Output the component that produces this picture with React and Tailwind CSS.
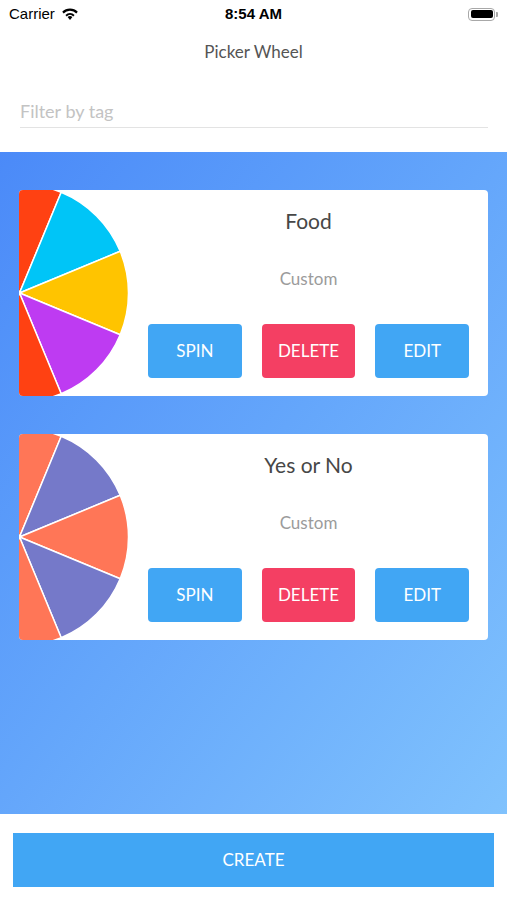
import React from "react";

const R = 109;
function pt(deg) {
  const a = (deg * Math.PI) / 180;
  return [0.5 + R * Math.cos(a), 103 + R * Math.sin(a)];
}
function slice(a1, a2) {
  const [x1, y1] = pt(a1);
  const [x2, y2] = pt(a2);
  return `M0.5 103 L${x1.toFixed(2)} ${y1.toFixed(2)} A${R} ${R} 0 0 1 ${x2.toFixed(2)} ${y2.toFixed(2)} Z`;
}

function Wheel({ colors }) {
  const ranges = [
    [-112.5, -67.5],
    [-67.5, -22.5],
    [-22.5, 22.5],
    [22.5, 67.5],
    [67.5, 112.5],
  ];
  return (
    <svg width="110" height="206" viewBox="0 0 110 206" className="shrink-0 block">
      {ranges.map((r, i) => (
        <path key={i} d={slice(r[0], r[1])} fill={colors[i]} stroke="#ffffff" strokeWidth="1.5" strokeLinejoin="round" />
      ))}
    </svg>
  );
}

function Card({ title, colors }) {
  return (
    <div className="flex h-[206px] w-full overflow-hidden rounded-[4px] bg-white">
      <Wheel colors={colors} />
      <div className="ml-[-1px] flex flex-1 flex-col items-center pl-5 pr-[19px] pt-[17px] pb-[18px]">
        <div className="text-[21px] leading-[28px] text-[#474747]">{title}</div>
        <div className="mt-[32px] text-[17px] leading-[24px] text-[#9b9b9b]">Custom</div>
        <div className="mt-[33px] flex w-full gap-[20px]">
          <button className="flex h-[54px] flex-1 items-center justify-center rounded-[4px] bg-[#41a6f4] text-[17px] text-white">SPIN</button>
          <button className="flex h-[54px] flex-1 items-center justify-center rounded-[4px] bg-[#f43f63] text-[17px] text-white">DELETE</button>
          <button className="flex h-[54px] flex-1 items-center justify-center rounded-[4px] bg-[#41a6f4] text-[17px] text-white">EDIT</button>
        </div>
      </div>
    </div>
  );
}

export default function App() {
  return (
    <div className="flex h-[900px] w-full flex-col bg-white" style={{ fontFamily: "Lato, 'Open Sans', sans-serif" }}>
      {/* status bar */}
      <div className="relative flex h-[28px] items-center justify-between px-[9px]" style={{ fontFamily: "'Liberation Sans', Arial, sans-serif" }}>
        <div className="flex items-center gap-[6px] text-[15px] text-black">
          <span>Carrier</span>
          <svg width="18" height="14" viewBox="0 0 18 13">
            <path d="M9 12.5 L6.6 9.6 A3.6 3.6 0 0 1 11.4 9.6 Z" fill="#000" />
            <path d="M4.4 7.4 A6.7 6.7 0 0 1 13.6 7.4 L12.3 8.9 A4.8 4.8 0 0 0 5.7 8.9 Z" fill="#000" />
            <path d="M1.2 4.3 A11 11 0 0 1 16.8 4.3 L15.3 5.9 A8.9 8.9 0 0 0 2.7 5.9 Z" fill="#000" />
          </svg>
        </div>
        <div className="absolute left-0 right-0 text-center text-[15px] font-bold text-black">8:54 AM</div>
        <div className="flex items-center">
          <div className="flex h-[13px] w-[27px] items-center rounded-[4px] border border-[#a8a8a8] p-[1.5px]">
            <div className="h-full w-full rounded-[2px] bg-black" />
          </div>
          <div className="ml-[1px] h-[5px] w-[2px] rounded-r-[1px] bg-[#a8a8a8]" />
        </div>
      </div>

      {/* header */}
      <div className="flex h-[48px] items-center justify-center text-[17px] text-[#555555]">Picker Wheel</div>

      {/* filter */}
      <div className="h-[76px] pl-5 pr-[19px] pt-[22px]">
        <div className="h-[30px] border-b border-[#e3e3e3] text-[18px] leading-[26px] text-[#c3c3c3]">Filter by tag</div>
      </div>

      {/* list */}
      <div className="flex flex-1 flex-col gap-[38px] bg-gradient-to-br from-[#4b8af8] to-[#80c2fd] px-[19px] pt-[38px]">
        <Card title="Food" colors={["#ff4112", "#00c5f7", "#ffc400", "#be3bf2", "#ff4112"]} />
        <Card title="Yes or No" colors={["#ff7657", "#7579c9", "#ff7657", "#7579c9", "#ff7657"]} />
      </div>

      {/* footer */}
      <div className="flex h-[86px] items-start px-[13px] pt-[19px]">
        <button className="flex h-[54px] w-full items-center justify-center bg-[#41a6f4] text-[17px] text-white">CREATE</button>
      </div>
    </div>
  );
}
